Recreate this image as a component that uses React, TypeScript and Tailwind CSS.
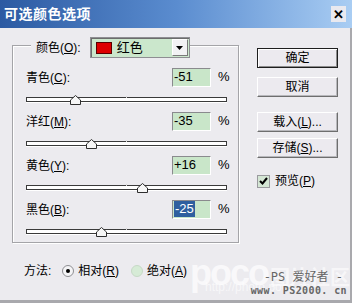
import React from "react";

const font = { fontFamily: '"Liberation Sans", "Noto Sans CJK SC", sans-serif' };

interface Channel {
  name: string;
  key: string;
  value: number;
  selected?: boolean;
}

const channels: Channel[] = [
  { name: "青色", key: "C", value: -51 },
  { name: "洋红", key: "M", value: -35 },
  { name: "黄色", key: "Y", value: 16 },
  { name: "黑色", key: "B", value: -25, selected: true },
];

function fmt(v: number) {
  return v > 0 ? `+${v}` : `${v}`;
}

function Slider({ value }: { value: number }) {
  // track is 200px wide, -100..100
  const left = ((value + 100) / 200) * 200;
  return (
    <div className="relative h-[11px] w-[201px]">
      <div className="absolute left-0 right-0 top-[3px] h-[5px] border border-[#3a3a3a] bg-white shadow-[0_1px_0_#ffffff]" />
      <div className="absolute left-[100px] top-[2px] h-[2px] w-[1px] bg-[#d8d8d8]" />
      <svg
        className="absolute top-[1px]"
        style={{ left: left - 5 }}
        width="11"
        height="10"
        viewBox="0 0 11 10"
      >
        <polygon points="0.5,9.5 0.5,5 5.5,0.5 10.5,5 10.5,9.5" fill="#f6f6f6" stroke="#2e2e2e" />
      </svg>
    </div>
  );
}

function Button({ label, def }: { label: React.ReactNode; def?: boolean }) {
  return (
    <div
      className={`flex h-[20px] w-[81px] items-center justify-center text-[12px] text-black ${
        def
          ? "border border-[#1e1e1e] shadow-[inset_1px_1px_0_#ffffff,inset_-1px_-1px_0_#8c8c8c]"
          : "border border-t-white border-l-white border-b-[#6e6e6e] border-r-[#6e6e6e] shadow-[inset_-1px_-1px_0_#b8b8bc]"
      } bg-[#eceaef]`}
    >
      {label}
    </div>
  );
}

export default function App() {
  return (
    <div
      className="flex h-[303px] w-[352px] flex-col overflow-hidden bg-[#ecebef] text-black"
      style={font}
    >
      {/* title bar */}
      <div className="flex h-[28px] shrink-0 items-center justify-between bg-gradient-to-r from-[#2c5aa2] via-[#5a8ccf] to-[#a9cdf3] pl-[4px] pr-[6px]">
        <span className="text-[14px] font-bold tracking-[0.5px] text-white">可选颜色选项</span>
        <div className="flex h-[16px] w-[15px] items-center justify-center bg-[#e9e9ef] text-[13px] font-black leading-none text-black">
          ✕
        </div>
      </div>

      <div className="relative flex flex-1 border-b-[3px] border-r-[2px] border-[#a9a9ad]">
        {/* watermark */}
        <div className="pointer-events-none absolute left-[190px] top-[227px] flex items-baseline">
          <span className="text-[36px] font-black leading-none tracking-[-2px] text-white/70">poco</span>
          <span className="ml-[2px] text-[20px] font-bold leading-none text-white/60" style={{ fontFamily: '"Noto Sans CJK SC", sans-serif' }}>
            图片社区
          </span>
        </div>
        <div className="pointer-events-none absolute left-[205px] top-[253px] text-[12px] leading-none text-white/60">
          http://photo.poco.cn/
        </div>

        {/* left column */}
        <div className="relative flex flex-col pl-[12px]">
          <div className="mt-[17px] flex h-[198px] w-[227px] flex-col border border-[#a4a4a8] shadow-[inset_1px_1px_0_#ffffff,1px_1px_0_#ffffff]">
            <div className="-mt-[9px] ml-[18px] flex w-fit items-center bg-[#ecebef] pl-[5px]">
              <span className="text-[12px]">
                颜色(<u>O</u>):
              </span>
              <div className="ml-[9px] flex h-[21px] w-[100px] items-center border border-[#8e8e92] bg-[#cbe7cc] shadow-[inset_1px_1px_0_#6c6c6c]">
                <div className="ml-[5px] h-[12px] w-[16px] border border-[#5a0000] bg-[#dd0000]" />
                <span className="ml-[5px] flex-1 text-[13px]">红色</span>
                <div className="mr-[1px] flex h-[17px] w-[16px] items-center justify-center border border-t-white border-l-white border-b-[#7a7a7a] border-r-[#7a7a7a] bg-[#f2f2f4]">
                  <svg width="7" height="4" viewBox="0 0 7 4">
                    <polygon points="0,0 7,0 3.5,4" fill="#000" />
                  </svg>
                </div>
              </div>
            </div>

            <div className="mt-[10px] flex flex-col pl-[13px]">
              {channels.map((c) => (
                <div key={c.key} className="flex h-[44px] flex-col">
                  <div className="flex h-[18px] items-center">
                    <span className="w-[146px] pt-[2px] text-[12px]">
                      {c.name}(<u>{c.key}</u>):
                    </span>
                    <div className="flex h-[19px] w-[39px] items-center border border-t-[#8a8a8e] border-l-[#8a8a8e] border-b-white border-r-white bg-[#c9e6c9] pl-[1px] text-[13px]">
                      {c.selected ? (
                        <span className="bg-[#2f5f9f] px-[1px] leading-[16px] text-white">{fmt(c.value)}</span>
                      ) : (
                        <span>{fmt(c.value)}</span>
                      )}
                    </div>
                    <span className="ml-[7px] text-[13px]">%</span>
                  </div>
                  <div className="mt-[8px]">
                    <Slider value={c.value} />
                  </div>
                </div>
              ))}
            </div>
          </div>

          <div className="mt-[19px] flex items-center pl-[12px] text-[12px]">
            <span>方法:</span>
            <div className="ml-[11px] flex h-[12px] w-[12px] items-center justify-center rounded-full border border-[#8e8e92] bg-[#f4f4f6]">
              <div className="h-[4px] w-[4px] rounded-full bg-black" />
            </div>
            <span className="ml-[4px]">
              相对(<u>R</u>)
            </span>
            <div className="ml-[12px] h-[12px] w-[12px] rounded-full border border-[#c7d9c7] bg-[#d6ebd6]" />
            <span className="ml-[4px]">
              绝对(<u>A</u>)
            </span>
          </div>
        </div>

        {/* right column */}
        <div className="relative ml-[18px] flex flex-col">
          <div className="mt-[20px]">
            <Button label="确定" def />
          </div>
          <div className="mt-[9px]">
            <Button label="取消" />
          </div>
          <div className="mt-[15px]">
            <Button
              label={
                <span>
                  载入(<u>L</u>)...
                </span>
              }
            />
          </div>
          <div className="mt-[6px]">
            <Button
              label={
                <span>
                  存储(<u>S</u>)...
                </span>
              }
            />
          </div>
          <div className="mt-[14px] flex items-center text-[12px]">
            <div className="flex h-[13px] w-[13px] items-center justify-center border border-[#9a9a9e] bg-[#d4e6d4]">
              <svg width="9" height="8" viewBox="0 0 9 8">
                <polyline points="1,4 3.5,6.5 8,1" fill="none" stroke="#000" strokeWidth="2" />
              </svg>
            </div>
            <span className="ml-[5px]">
              预览(<u>P</u>)
            </span>
          </div>
        </div>

        {/* ps2000 stamp */}
        <div
          className="pointer-events-none absolute right-[3px] top-[243px] flex flex-col items-end leading-none text-[#666]"
          style={{ fontFamily: '"DejaVu Sans Mono", "Noto Sans CJK SC", monospace' }}
        >
          <span className="pr-[4px] text-[12px]">-PS 爱好者 -</span>
          <span className="mt-[3px] text-[10px] font-bold tracking-[0.4px]">www. PS2000. cn</span>
        </div>
      </div>
    </div>
  );
}
